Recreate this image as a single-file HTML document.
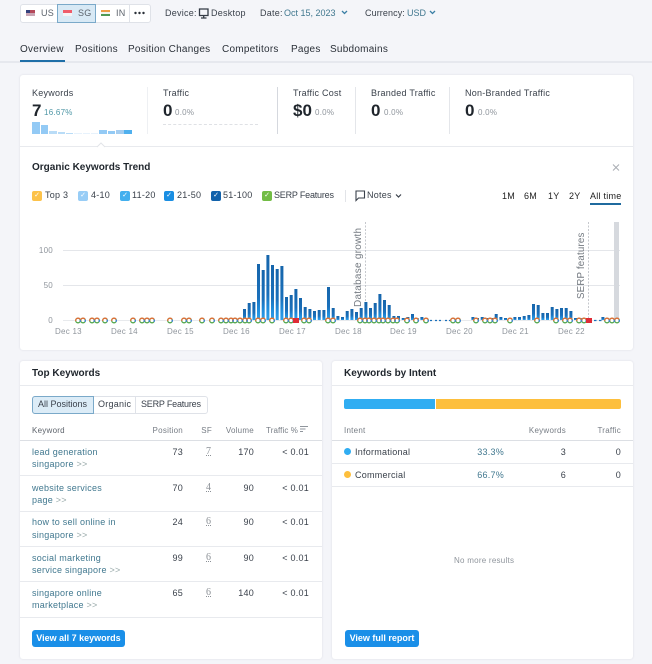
<!DOCTYPE html>
<html lang="en"><head><meta charset="utf-8"><title>Overview</title>
<style>
html,body{margin:0;padding:0;background:#f4f5f9}
#w{position:relative;width:652px;height:664px;overflow:hidden;background:#f4f5f9;font-family:"Liberation Sans",sans-serif;color:#3a414b;font-size:9px;letter-spacing:.25px;filter:blur(.35px)}
#w div,#w span.t{position:absolute}
.t{white-space:nowrap;line-height:12px}
.r{text-align:right}
.l{color:#41788f}
.b{color:#1f252c;font-weight:bold;letter-spacing:0}
.g{color:#8f959c;font-size:8px}
.card{background:#fff;border-radius:3px;box-shadow:0 0 2px rgba(40,50,70,.12)}
.hl{height:1px;background:#e8eaee}
.cb{width:10px;height:10px;border-radius:2px;top:190.500px;color:#fff;font-size:7px;line-height:10px;text-align:center;letter-spacing:0}
.btn{background:#1a8fe8;color:#fff;border-radius:3px;height:17px;line-height:17px;top:630px;text-align:center;font-weight:bold;font-size:9px;letter-spacing:0}
.sf{color:#8b9096;font-family:"Liberation Serif",serif;text-decoration:underline dotted;font-size:10px}
svg{position:absolute;left:0;top:0}
#gs circle{r:2.3px;cy:320.500px;fill:#fff;stroke:#55a84f;stroke-width:1.300}
#gr circle{r:2.3px;cy:320.500px;fill:none;stroke:#e2703a;stroke-width:1.300;stroke-dasharray:6.500 7.950;stroke-dashoffset:-6.500}
#gb circle{r:2.3px;cy:320.500px;fill:none;stroke:#3d7fdd;stroke-width:1.300;stroke-dasharray:2.500 11.950;stroke-dashoffset:1.200}
#bars rect{width:3px}
</style></head><body><div id="w">

<!-- top bar -->
<div style="left:20px;top:4px;width:129px;height:16.500px;background:#fff;border:1px solid #dfe2e8;border-radius:3px"></div>
<div style="left:57px;top:4px;width:37px;height:16.500px;background:#d8e9f5;border:1px solid #7aa9c9"></div>
<div style="left:129px;top:5px;width:1px;height:17px;background:#dfe2e8"></div>
<div style="left:26px;top:10px;width:9px;height:6px;background:linear-gradient(#b5495a 0 50%,#c9a5b4 50% 100%)"></div>
<div style="left:26px;top:10px;width:4px;height:3px;background:#34407c"></div>
<span class="t" style="left:41px;top:7px;color:#5b626b">US</span>
<div style="left:63px;top:10px;width:9px;height:6px;background:linear-gradient(#ef5c6a 0 50%,#f6f2f4 50% 100%)"></div>
<span class="t" style="left:78px;top:7px;color:#5b626b">SG</span>
<div style="left:101px;top:10px;width:9px;height:6px;background:linear-gradient(#ee9c45 0 33%,#f4f4ee 33% 66%,#4f9a55 66% 100%)"></div>
<span class="t" style="left:116px;top:7px;color:#5b626b">IN</span>
<span class="t" style="left:165px;top:7px">Device:</span>
<svg width="652" height="30" style="height:30px"><g fill="#2a3038"><circle cx="135.500" cy="13" r="1.200"/><circle cx="139.500" cy="13" r="1.200"/><circle cx="143.500" cy="13" r="1.200"/></g><path d="M199.500 9h8.500v6.500h-8.500zM203.700 15.500v2M201 18h5.500" fill="none" stroke="#333a44" stroke-width="1.300"/><path d="M342 11l2.500 2.500 2.500-2.500" fill="none" stroke="#3b7fa5" stroke-width="1.300"/><path d="M430 11l2.500 2.500 2.500-2.500" fill="none" stroke="#3b7fa5" stroke-width="1.300"/></svg>
<span class="t" style="left:211px;top:7px">Desktop</span>
<span class="t" style="left:260px;top:7px">Date:</span>
<span class="t l" style="left:284px;top:7px;letter-spacing:0">Oct 15, 2023</span>
<span class="t" style="left:365px;top:7px;letter-spacing:.1px">Currency:</span>
<span class="t l" style="left:407px;top:7px;letter-spacing:0">USD</span>

<!-- tabs -->
<div class="hl" style="left:0;top:61px;width:652px;height:1.500px;background:#e6e8ee"></div>
<div style="left:20px;top:60px;width:45px;height:2px;background:#1f6fa8"></div>
<span class="t" style="left:20px;top:44px;font-size:10px;color:#2a3038">Overview</span>
<span class="t" style="left:75px;top:44px;font-size:10px;color:#2a3038">Positions</span>
<span class="t" style="left:128px;top:44px;font-size:10px;color:#2a3038">Position Changes</span>
<span class="t" style="left:222px;top:44px;font-size:10px;color:#2a3038">Competitors</span>
<span class="t" style="left:291px;top:44px;font-size:10px;color:#2a3038">Pages</span>
<span class="t" style="left:330px;top:44px;font-size:10px;color:#2a3038">Subdomains</span>

<!-- main card -->
<div class="card" style="left:20px;top:75px;width:613px;height:275px"></div>
<div class="hl" style="left:20px;top:146px;width:613px"></div>
<div style="left:147px;top:87px;width:1px;height:47px;background:#eef0f3"></div>
<div style="left:277px;top:87px;width:1px;height:47px;background:#d5d8de"></div>
<div style="left:355px;top:87px;width:1px;height:47px;background:#e4e6ea"></div>
<div style="left:449px;top:87px;width:1px;height:47px;background:#e4e6ea"></div>

<span class="t" style="left:32px;top:87px">Keywords</span>
<span class="t b" style="left:32px;top:104px;font-size:17px;line-height:14px">7</span>
<span class="t" style="left:44px;top:107px;font-size:8px;color:#4f97a6">16.67%</span>
<span class="t" style="left:163px;top:87px">Traffic</span>
<span class="t b" style="left:163px;top:104px;font-size:17px;line-height:14px">0</span>
<span class="t g" style="left:175px;top:107px">0.0%</span>
<div style="left:163px;top:124px;width:95px;border-top:1px dashed #dfe1e5"></div>
<span class="t" style="left:293px;top:87px">Traffic Cost</span>
<span class="t b" style="left:293px;top:104px;font-size:17px;line-height:14px">$0</span>
<span class="t g" style="left:315px;top:107px">0.0%</span>
<span class="t" style="left:371px;top:87px">Branded Traffic</span>
<span class="t b" style="left:371px;top:104px;font-size:17px;line-height:14px">0</span>
<span class="t g" style="left:384px;top:107px">0.0%</span>
<span class="t" style="left:465px;top:87px">Non-Branded Traffic</span>
<span class="t b" style="left:465px;top:104px;font-size:17px;line-height:14px">0</span>
<span class="t g" style="left:478px;top:107px">0.0%</span>

<!-- sparkline + chart -->
<svg width="652" height="664" viewBox="0 0 652 664">
<defs><linearGradient id="bg" x1="0" y1="0" x2="0" y2="1"><stop offset="0" stop-color="#1665ab"/><stop offset=".6" stop-color="#1a70bb"/><stop offset=".8" stop-color="#1f8bda"/><stop offset="1" stop-color="#30a2ec"/></linearGradient></defs>
<g fill="#93caf5"><rect x="32" y="122" width="8" height="12"/><rect x="41" y="125" width="7" height="9"/><rect x="49" y="131" width="8" height="3" fill="#b9dcf7"/><rect x="58" y="132" width="7" height="2" fill="#b9dcf7"/><rect x="66" y="133" width="7" height="1" fill="#b9dcf7"/><rect x="74" y="133.500" width="8" height=".5" fill="#cfe6f8"/><rect x="83" y="133.500" width="7" height=".5" fill="#cfe6f8"/><rect x="91" y="133.500" width="7" height=".5" fill="#cfe6f8"/><rect x="99" y="130" width="8" height="4"/><rect x="108" y="131" width="7" height="3"/><rect x="116" y="130" width="8" height="4" fill="#a5cdf0"/><rect x="124" y="130" width="8" height="4" fill="#4fb0ee"/></g>
<path d="M97 147l4-4 4 4" fill="#fff" stroke="#e2e4e8"/>
<path d="M613 164.500l6 6M619 164.500l-6 6" stroke="#a9adb3" stroke-width="1" fill="none"/>
<path d="M356 191h8.500v7h-6l-2.500 2.500z" fill="none" stroke="#3a414b" stroke-width="1.100"/>
<path d="M396 194.500l2.500 2.500 2.500-2.500" fill="none" stroke="#3a414b" stroke-width="1.200"/>
<path d="M63 250.500H620M63 285.500H620" stroke="#e4e6ea" stroke-width="1"/>
<path d="M63 320.500H620" stroke="#e8eaed" stroke-width="1"/>
<rect x="614" y="222" width="5" height="98" fill="#d6d9de"/>
<path d="M365.500 222V320M588.500 222V320" stroke="#aeb2b8" stroke-width=".7" stroke-dasharray="2 1.500"/>
<text transform="translate(361 307) rotate(-90)" font-family="Liberation Sans" font-size="10" fill="#757b82" letter-spacing=".25">Database growth</text>
<text transform="translate(584 299) rotate(-90)" font-family="Liberation Sans" font-size="9.700" fill="#757b82" letter-spacing=".2">SERP features</text>
<g id="bars" fill="url(#bg)">
<rect x="243" y="309" height="11"/><rect x="247.700" y="303" height="17"/><rect x="252.400" y="302" height="18"/><rect x="257" y="264" height="56"/><rect x="261.700" y="270" height="50"/><rect x="266.400" y="255" height="65"/><rect x="271" y="265" height="55"/><rect x="275.700" y="269" height="51"/><rect x="280.400" y="266" height="54"/><rect x="285" y="297" height="23"/><rect x="289.700" y="295" height="25"/><rect x="294.400" y="289" height="31"/><rect x="299" y="298" height="22"/><rect x="303.700" y="307" height="13"/><rect x="308.400" y="309" height="11"/><rect x="313" y="311" height="9"/><rect x="317.700" y="310" height="10"/><rect x="322.400" y="310" height="10"/><rect x="327" y="287" height="33"/><rect x="331.700" y="308" height="12"/><rect x="336.400" y="316" height="4"/><rect x="341" y="317" height="3"/><rect x="345.700" y="311" height="9"/><rect x="350.400" y="309" height="11"/><rect x="355" y="312" height="8"/><rect x="359.700" y="308" height="12"/><rect x="364.400" y="302" height="18"/><rect x="369" y="308" height="12"/><rect x="373.700" y="303" height="17"/><rect x="378.400" y="294" height="26"/><rect x="383" y="300" height="20"/><rect x="387.700" y="305" height="15"/><rect x="392.400" y="316" height="4"/><rect x="397" y="316" height="4"/><rect x="401.700" y="318" height="2"/><rect x="406.400" y="317" height="3"/><rect x="411" y="314" height="6"/><rect x="415.700" y="318" height="2"/><rect x="420.400" y="317" height="3"/><rect x="425" y="318" height="2"/><rect x="471.400" y="317" height="3"/><rect x="476" y="318" height="2"/><rect x="480.700" y="317" height="3"/><rect x="485.400" y="318" height="2"/><rect x="490" y="318" height="2"/><rect x="494.700" y="314" height="6"/><rect x="499.400" y="317" height="3"/><rect x="504" y="318" height="2"/><rect x="508.700" y="318" height="2"/><rect x="513.400" y="317" height="3"/><rect x="518" y="317" height="3"/><rect x="522.700" y="316" height="4"/><rect x="527.400" y="315" height="5"/><rect x="532" y="304" height="16"/><rect x="536.700" y="305" height="15"/><rect x="541.400" y="313" height="7"/><rect x="546" y="313" height="7"/><rect x="550.700" y="307" height="13"/><rect x="555.400" y="309" height="11"/><rect x="560" y="308" height="12"/><rect x="564.700" y="308" height="12"/><rect x="569.400" y="311" height="9"/><rect x="574" y="318" height="2"/><rect x="578.700" y="318" height="2"/><rect x="583.400" y="318" height="2"/><rect x="601.400" y="317" height="3"/>
</g>
<path d="M430 320.500h2M435 320.500h2M439 320.500h2M445 320.500h2M449 320.500h2M594 320.500h2.500M599 320.500h2.500" stroke="#1a70bb" stroke-width="1.300"/>
<g id="gs"><circle cx="78"/><circle cx="83"/><circle cx="92"/><circle cx="97"/><circle cx="105"/><circle cx="114"/><circle cx="133"/><circle cx="142"/><circle cx="147"/><circle cx="152"/><circle cx="170"/><circle cx="184"/><circle cx="189"/><circle cx="202"/><circle cx="212"/><circle cx="221"/><circle cx="226"/><circle cx="231"/><circle cx="235"/><circle cx="240"/><circle cx="245"/><circle cx="249"/><circle cx="258"/><circle cx="263"/><circle cx="272"/><circle cx="286"/><circle cx="291"/><circle cx="304"/><circle cx="309"/><circle cx="328"/><circle cx="333"/><circle cx="360"/><circle cx="365"/><circle cx="369"/><circle cx="374"/><circle cx="379"/><circle cx="383"/><circle cx="388"/><circle cx="393"/><circle cx="397"/><circle cx="407"/><circle cx="416"/><circle cx="426"/><circle cx="453"/><circle cx="458"/><circle cx="476"/><circle cx="485"/><circle cx="490"/><circle cx="495"/><circle cx="510"/><circle cx="537"/><circle cx="556"/><circle cx="565"/><circle cx="570"/><circle cx="579"/><circle cx="584"/><circle cx="607"/><circle cx="612"/><circle cx="617"/></g>
<g id="gr"><circle cx="78"/><circle cx="83"/><circle cx="92"/><circle cx="97"/><circle cx="105"/><circle cx="114"/><circle cx="133"/><circle cx="142"/><circle cx="147"/><circle cx="152"/><circle cx="170"/><circle cx="184"/><circle cx="189"/><circle cx="202"/><circle cx="212"/><circle cx="221"/><circle cx="226"/><circle cx="231"/><circle cx="235"/><circle cx="240"/><circle cx="245"/><circle cx="249"/><circle cx="258"/><circle cx="263"/><circle cx="272"/><circle cx="286"/><circle cx="291"/><circle cx="304"/><circle cx="309"/><circle cx="328"/><circle cx="333"/><circle cx="360"/><circle cx="365"/><circle cx="369"/><circle cx="374"/><circle cx="379"/><circle cx="383"/><circle cx="388"/><circle cx="393"/><circle cx="397"/><circle cx="407"/><circle cx="416"/><circle cx="426"/><circle cx="453"/><circle cx="458"/><circle cx="476"/><circle cx="485"/><circle cx="490"/><circle cx="495"/><circle cx="510"/><circle cx="537"/><circle cx="556"/><circle cx="565"/><circle cx="570"/><circle cx="579"/><circle cx="584"/><circle cx="607"/><circle cx="612"/><circle cx="617"/></g>
<g id="gb"><circle cx="78"/><circle cx="83"/><circle cx="92"/><circle cx="97"/><circle cx="105"/><circle cx="114"/><circle cx="133"/><circle cx="142"/><circle cx="147"/><circle cx="152"/><circle cx="170"/><circle cx="184"/><circle cx="189"/><circle cx="202"/><circle cx="212"/><circle cx="221"/><circle cx="226"/><circle cx="231"/><circle cx="235"/><circle cx="240"/><circle cx="245"/><circle cx="249"/><circle cx="258"/><circle cx="263"/><circle cx="272"/><circle cx="286"/><circle cx="291"/><circle cx="304"/><circle cx="309"/><circle cx="328"/><circle cx="333"/><circle cx="360"/><circle cx="365"/><circle cx="369"/><circle cx="374"/><circle cx="379"/><circle cx="383"/><circle cx="388"/><circle cx="393"/><circle cx="397"/><circle cx="407"/><circle cx="416"/><circle cx="426"/><circle cx="453"/><circle cx="458"/><circle cx="476"/><circle cx="485"/><circle cx="490"/><circle cx="495"/><circle cx="510"/><circle cx="537"/><circle cx="556"/><circle cx="565"/><circle cx="570"/><circle cx="579"/><circle cx="584"/><circle cx="607"/><circle cx="612"/><circle cx="617"/></g>
<rect x="293" y="318" width="6" height="5" fill="#df2c36"/><rect x="586" y="318" width="6" height="5" fill="#df2c36"/>
</svg>

<span class="t b" style="left:32px;top:162px;font-size:10px">Organic Keywords Trend</span>
<div class="cb" style="left:32px;background:#fcc24a">✓</div><span class="t" style="left:45px;top:189px">Top 3</span>
<div class="cb" style="left:78px;background:#98cdf6">✓</div><span class="t" style="left:91px;top:189px">4-10</span>
<div class="cb" style="left:120px;background:#42afee">✓</div><span class="t" style="left:132px;top:189px">11-20</span>
<div class="cb" style="left:164px;background:#1a8ee2">✓</div><span class="t" style="left:177px;top:189px">21-50</span>
<div class="cb" style="left:211px;background:#1262ab">✓</div><span class="t" style="left:223px;top:189px">51-100</span>
<div class="cb" style="left:262px;background:#72bc45">✓</div><span class="t" style="left:274px;top:189px;letter-spacing:-.2px">SERP Features</span>
<div style="left:345px;top:190px;width:1px;height:12px;background:#e2e4e8"></div>
<span class="t" style="left:367px;top:189px">Notes</span>
<span class="t" style="left:502px;top:190px;color:#222">1M</span>
<span class="t" style="left:524px;top:190px;color:#222">6M</span>
<span class="t" style="left:548px;top:190px;color:#222">1Y</span>
<span class="t" style="left:569px;top:190px;color:#222">2Y</span>
<span class="t" style="left:590px;top:190px;color:#222">All time</span>
<div style="left:590px;top:203px;width:31px;height:1.500px;background:#1f6a9e"></div>

<span class="t r g" style="left:30px;top:245px;width:23px">100</span>
<span class="t r g" style="left:30px;top:280px;width:23px">50</span>
<span class="t r g" style="left:30px;top:315px;width:23px">0</span>
<span class="t g" style="left:55px;top:326px">Dec 13</span>
<span class="t g" style="left:111px;top:326px">Dec 14</span>
<span class="t g" style="left:167px;top:326px">Dec 15</span>
<span class="t g" style="left:223px;top:326px">Dec 16</span>
<span class="t g" style="left:279px;top:326px">Dec 17</span>
<span class="t g" style="left:335px;top:326px">Dec 18</span>
<span class="t g" style="left:390px;top:326px">Dec 19</span>
<span class="t g" style="left:446px;top:326px">Dec 20</span>
<span class="t g" style="left:502px;top:326px">Dec 21</span>
<span class="t g" style="left:558px;top:326px">Dec 22</span>

<!-- top keywords -->
<div class="card" style="left:20px;top:361px;width:302px;height:298px"></div>
<div class="hl" style="left:20px;top:385px;width:302px"></div>
<span class="t b" style="left:32px;top:368px;font-size:10px">Top Keywords</span>
<div style="left:32px;top:395.500px;width:173.500px;height:16px;border:1px solid #dfe2e8;border-radius:3px"></div>
<div style="left:32px;top:395.500px;width:60px;height:16px;background:#dcecf7;border:1px solid #7aa9c9;border-radius:3px 0 0 3px"></div>
<div style="left:135px;top:396px;width:1px;height:17px;background:#dfe2e8"></div>
<span class="t" style="left:38px;top:398px;letter-spacing:0">All Positions</span>
<span class="t" style="left:98px;top:398px">Organic</span>
<span class="t" style="left:141px;top:398px;letter-spacing:-.2px">SERP Features</span>

<span class="t g" style="left:32px;top:425px;color:#5d636b">Keyword</span>
<span class="t r g" style="left:130px;top:425px;width:53px;color:#777d85">Position</span>
<span class="t r g" style="left:192px;top:425px;width:20px;color:#777d85">SF</span>
<span class="t r g" style="left:214px;top:425px;width:40px;color:#777d85">Volume</span>
<span class="t g" style="left:266px;top:425px;color:#777d85;letter-spacing:.1px">Traffic %</span>
<svg width="652" height="664"><path d="M300 426.500h8M300 429h5.500M300 431.500h3" stroke="#8f959c" stroke-width="1"/></svg>
<div class="hl" style="left:20px;top:440px;width:302px;background:#dcdfe4"></div>
<div class="hl" style="left:20px;top:475px;width:302px"></div>
<div class="hl" style="left:20px;top:511px;width:302px"></div>
<div class="hl" style="left:20px;top:546px;width:302px"></div>
<div class="hl" style="left:20px;top:581px;width:302px"></div>
<div class="hl" style="left:20px;top:617px;width:302px"></div>

<span class="t l" style="left:32px;top:446px">lead generation</span><span class="t l" style="left:32px;top:458px">singapore <span style="color:#9aa">&gt;&gt;</span></span>
<span class="t r" style="left:150px;top:446px;width:33px">73</span><span class="t sf" style="left:206px;top:446px">7</span><span class="t r" style="left:214px;top:446px;width:40px">170</span><span class="t r" style="left:269px;top:446px;width:40px">&lt; 0.01</span>
<span class="t l" style="left:32px;top:482px">website services</span><span class="t l" style="left:32px;top:494px">page <span style="color:#9aa">&gt;&gt;</span></span>
<span class="t r" style="left:150px;top:482px;width:33px">70</span><span class="t sf" style="left:206px;top:482px">4</span><span class="t r" style="left:214px;top:482px;width:40px">90</span><span class="t r" style="left:269px;top:482px;width:40px">&lt; 0.01</span>
<span class="t l" style="left:32px;top:516px">how to sell online in</span><span class="t l" style="left:32px;top:529px">singapore <span style="color:#9aa">&gt;&gt;</span></span>
<span class="t r" style="left:150px;top:516px;width:33px">24</span><span class="t sf" style="left:206px;top:516px">6</span><span class="t r" style="left:214px;top:516px;width:40px">90</span><span class="t r" style="left:269px;top:516px;width:40px">&lt; 0.01</span>
<span class="t l" style="left:32px;top:552px">social marketing</span><span class="t l" style="left:32px;top:564px">service singapore <span style="color:#9aa">&gt;&gt;</span></span>
<span class="t r" style="left:150px;top:552px;width:33px">99</span><span class="t sf" style="left:206px;top:552px">6</span><span class="t r" style="left:214px;top:552px;width:40px">90</span><span class="t r" style="left:269px;top:552px;width:40px">&lt; 0.01</span>
<span class="t l" style="left:32px;top:587px">singapore online</span><span class="t l" style="left:32px;top:599px">marketplace <span style="color:#9aa">&gt;&gt;</span></span>
<span class="t r" style="left:150px;top:587px;width:33px">65</span><span class="t sf" style="left:206px;top:587px">6</span><span class="t r" style="left:214px;top:587px;width:40px">140</span><span class="t r" style="left:269px;top:587px;width:40px">&lt; 0.01</span>
<div class="btn" style="left:32px;width:93px">View all 7 keywords</div>

<!-- intent -->
<div class="card" style="left:332px;top:361px;width:301px;height:298px"></div>
<div class="hl" style="left:332px;top:385px;width:301px"></div>
<span class="t b" style="left:344px;top:368px;font-size:10px">Keywords by Intent</span>
<div style="left:344px;top:399px;width:91px;height:10px;background:#30adf2;border-radius:2px 0 0 2px"></div>
<div style="left:436px;top:399px;width:185px;height:10px;background:#fdbf3d;border-radius:0 2px 2px 0"></div>
<span class="t g" style="left:344px;top:425px;color:#777d85">Intent</span>
<span class="t r g" style="left:506px;top:425px;width:60px;color:#777d85">Keywords</span>
<span class="t r g" style="left:581px;top:425px;width:40px;color:#777d85">Traffic</span>
<div class="hl" style="left:332px;top:440px;width:301px;background:#dcdfe4"></div>
<div class="hl" style="left:332px;top:463px;width:301px"></div>
<div class="hl" style="left:332px;top:486px;width:301px"></div>
<div style="left:344px;top:448px;width:7px;height:7px;border-radius:50%;background:#30adf2"></div>
<span class="t" style="left:355px;top:446px">Informational</span>
<span class="t r l" style="left:454px;top:446px;width:50px">33.3%</span>
<span class="t r" style="left:536px;top:446px;width:30px">3</span>
<span class="t r" style="left:591px;top:446px;width:30px">0</span>
<div style="left:344px;top:471px;width:7px;height:7px;border-radius:50%;background:#fdbf3d"></div>
<span class="t" style="left:355px;top:469px">Commercial</span>
<span class="t r l" style="left:454px;top:469px;width:50px">66.7%</span>
<span class="t r" style="left:536px;top:469px;width:30px">6</span>
<span class="t r" style="left:591px;top:469px;width:30px">0</span>
<span class="t g" style="left:454px;top:555px">No more results</span>
<div class="btn" style="left:345px;width:74px">View full report</div>
</div></body></html>
